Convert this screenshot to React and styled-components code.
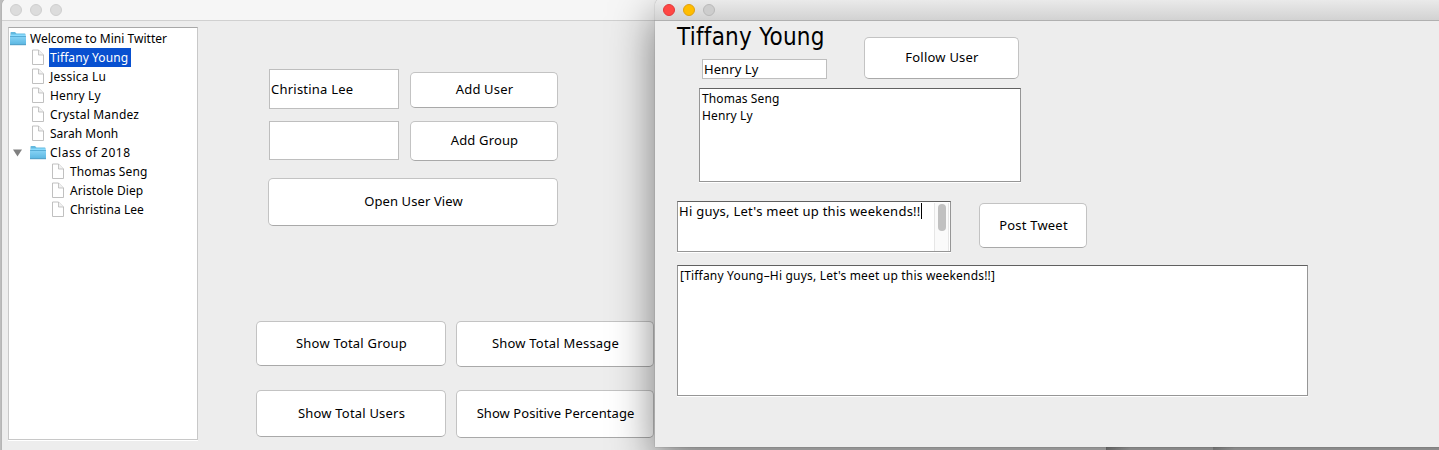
import React from "react";
import styled, { createGlobalStyle } from "styled-components";

const Global = createGlobalStyle`
  * { box-sizing: border-box; }
  html, body { margin: 0; height: 450px; overflow: hidden; }
  body { font-family: "Noto Sans", "Open Sans", sans-serif; color: #000; }
`;

const Desktop = styled.div`
  position: relative;
  width: 1439px;
  height: 450px;
  overflow: hidden;
  background: linear-gradient(90deg, #bdbdbd 0 1106px, #a0a0a0 1106px, #d8d8d8 1130px 1213px, #b4b4b4 1213px, #dedede 1235px);
`;

const Window = styled.section`
  position: absolute;
  top: -1px;
  left: ${(p) => p.$left}px;
  width: ${(p) => p.$width}px;
  height: ${(p) => p.$height}px;
  background: #ededed;
  border-radius: 6px 6px 0 0;
  box-shadow: ${(p) =>
    p.$active
      ? "0 0 1px rgba(0,0,0,.55), 0 16px 44px rgba(0,0,0,.5)"
      : "0 0 1px rgba(0,0,0,.4)"};
`;

const TitleBar = styled.header`
  display: flex;
  align-items: center;
  gap: 8px;
  height: 22px;
  padding: 0 8px;
  border-radius: 6px 6px 0 0;
  border-bottom: 1px solid ${(p) => (p.$active ? "#b0b0b0" : "#d0d0d0")};
  background: ${(p) => (p.$active ? "linear-gradient(#ebebeb, #d2d2d2)" : "#f6f6f6")};
`;

const Light = styled.i`
  width: 12px;
  height: 12px;
  border-radius: 50%;
  background: ${(p) => p.$fill};
  border: 1px solid ${(p) => p.$edge};
`;

const Text = styled.span`
  font-size: ${(p) => p.$size || 13}px;
  letter-spacing: ${(p) => p.$track || 0}px;
  line-height: 17px;
  white-space: pre;
`;

const MainBody = styled.div`
  display: flex;
  align-items: flex-start;
  padding: 6px 0 0 6px;
`;

const Tree = styled.div`
  width: 190px;
  height: 413px;
  padding: 1px 0;
  background: #fff;
  border: 1px solid #c8c8c8;
  border-top-color: #a8a8a8;
  box-shadow: 0 1px #fff;
`;

const TreeRow = styled.div`
  display: flex;
  align-items: center;
  height: 19px;
  padding-left: ${(p) => p.$indent}px;
`;

const Arrow = styled.svg`
  width: 10px;
  height: 8px;
  margin-right: 7px;
`;

const FileSvg = styled.svg`
  width: 13px;
  height: 17px;
  margin-right: 4px;
`;

const FolderSvg = styled.svg`
  width: 17px;
  height: 15px;
  margin-right: 3px;
`;

const NodeName = styled(Text)`
  height: 19px;
  line-height: 19px;
  padding: 0 3px 0 1px;
  color: ${(p) => (p.$selected ? "#fff" : "#000")};
  background: ${(p) => (p.$selected ? "#0850d0" : "transparent")};
`;

const Controls = styled.div`
  display: flex;
  flex-direction: column;
  padding: 42px 0 0 58px;
`;

const AddForm = styled.div`
  display: grid;
  grid-template-columns: 130px 148px;
  column-gap: 11px;
  row-gap: 12px;
  align-items: start;
  padding-left: 13px;
`;

const OpenRow = styled.div`
  display: flex;
  padding: 17px 0 0 12px;
`;

const StatsGrid = styled.div`
  display: grid;
  grid-template-columns: 190px 198px;
  column-gap: 10px;
  row-gap: 23px;
  align-items: start;
  padding-top: 95px;
`;

const Button = styled.button`
  display: flex;
  align-items: center;
  justify-content: center;
  width: ${(p) => p.$w}px;
  height: ${(p) => p.$h}px;
  padding: 0 0 ${(p) => p.$lift || 0}px 1px;
  margin-top: ${(p) => p.$drop || 0}px;
  font-family: inherit;
  color: #000;
  background: #fff;
  border: 1px solid #c3c3c3;
  border-bottom-color: #a9a9a9;
  border-radius: 5px;
`;

const Field = styled.div`
  display: flex;
  align-items: center;
  width: ${(p) => p.$w}px;
  height: ${(p) => p.$h}px;
  padding-left: 1px;
  background: #fff;
  border: 1px solid #bebebe;
`;

const UserBody = styled.div`
  padding-left: 22px;
`;

const Heading = styled.h1`
  margin: 0;
  height: 38px;
  font: 400 24px/32px "DejaVu Sans Condensed", "DejaVu Sans", sans-serif;
  font-stretch: condensed;
  letter-spacing: ${(p) => p.$track}px;
  white-space: nowrap;
`;

const TopRow = styled.div`
  display: flex;
  height: 67px;
`;

const Identity = styled.div`
  width: 187px;
`;

const FieldInset = styled.div`
  padding-left: 25px;
`;

const Pane = styled.div`
  display: flex;
  flex-direction: column;
  width: ${(p) => p.$w}px;
  height: ${(p) => p.$h}px;
  margin-left: ${(p) => p.$inset || 0}px;
  padding: 1px 2px;
  background: #fff;
  border: 1px solid #969696;
  border-top-color: #606060;
  box-shadow: 0 1px #fff;
`;

const Compose = styled.div`
  display: flex;
  gap: 28px;
  padding: 19px 0 13px;
`;

const ComposePane = styled(Pane)`
  flex-direction: row;
  justify-content: space-between;
  padding: 1px 1px 0;
`;

const Caret = styled.i`
  display: inline-block;
  width: 1px;
  height: 16px;
  background: #000;
  vertical-align: top;
`;

const ScrollTrack = styled.div`
  width: 15px;
  height: 48px;
  padding: 1px 3px;
  background: #fafafa;
  border: solid #e6e6e6;
  border-width: 0 1px;
`;

const Thumb = styled.div`
  width: 8px;
  height: 27px;
  border-radius: 4px;
  background: #c1c1c1;
`;

const FolderIcon = () => (
  <FolderSvg viewBox="0 0 17 15">
    <defs>
      <linearGradient id="folder" x2="0" y2="1">
        <stop offset="0" stopColor="#87d3f5" />
        <stop offset="1" stopColor="#5cb7e2" />
      </linearGradient>
    </defs>
    <path d="M1.5 13V1.7Q1.5 1 2.2 1H6L7.5 2.5H15.8Q16.5 2.5 16.5 3.3V13Z" fill="#63b9df" />
    <path d="M2 3.5H16V5H2Z" fill="#8bdcff" />
    <path d="M1 5.5H17V13.5H1Z" fill="url(#folder)" />
    <path d="M1 5.5H17" stroke="#4fa6cf" strokeWidth=".8" />
    <path d="M1 13.7H17" stroke="#3f97c2" />
  </FolderSvg>
);

const FileIcon = () => (
  <FileSvg viewBox="0 0 13 17" fill="#fff" stroke="#b9b9b9">
    <path d="M0.5 1H6.5L11.5 6V15.5H0.5Z" strokeWidth=".9" />
    <path d="M6.5 1V6H11.5" fill="#f1f1f1" strokeWidth=".8" />
  </FileSvg>
);

const NODES = [
  { name: "Welcome to Mini Twitter", kind: "folder", indent: 0, track: 0.02 },
  { name: "Tiffany Young", indent: 23, track: 0.08, selected: true },
  { name: "Jessica Lu", indent: 23, track: 0.22 },
  { name: "Henry Ly", indent: 23, track: 0.12 },
  { name: "Crystal Mandez", indent: 23, track: 0.2 },
  { name: "Sarah Monh", indent: 23, track: 0 },
  { name: "Class of 2018", kind: "folder", indent: 3, arrow: true, track: 0.5 },
  { name: "Thomas Seng", indent: 43, track: 0.1 },
  { name: "Aristole Diep", indent: 43, track: 0.1 },
  { name: "Christina Lee", indent: 43, track: 0.04 },
];

const GREY = { $fill: "#dcdcdc", $edge: "#cfcfcf" };

export default function App() {
  return (
    <Desktop>
      <Global />
      <Window $left={2} $width={1104} $height={460}>
        <TitleBar>
          <Light {...GREY} />
          <Light {...GREY} />
          <Light {...GREY} />
        </TitleBar>
        <MainBody>
          <Tree>
            {NODES.map((n) => (
              <TreeRow key={n.name} $indent={n.indent}>
                {n.arrow && (
                  <Arrow viewBox="0 0 10 8">
                    <path d="M1 0.5H10L5.5 7.5Z" fill="#808080" />
                  </Arrow>
                )}
                {n.kind === "folder" ? <FolderIcon /> : <FileIcon />}
                <NodeName $size={12} $track={n.track} $selected={n.selected}>
                  {n.name}
                </NodeName>
              </TreeRow>
            ))}
          </Tree>
          <Controls>
            <AddForm>
              <Field $w={130} $h={40}><Text $track={0.23}>Christina Lee</Text></Field>
              <Button $w={148} $h={36} $drop={3} $lift={2}><Text $track={0.18}>Add User</Text></Button>
              <Field $w={130} $h={39}><Text /></Field>
              <Button $w={148} $h={40} $lift={2}><Text $track={0.15}>Add Group</Text></Button>
            </AddForm>
            <OpenRow>
              <Button $w={290} $h={48} $lift={2}><Text $track={0.1}>Open User View</Text></Button>
            </OpenRow>
            <StatsGrid>
              <Button $w={190} $h={45}><Text $track={0.2}>Show Total Group</Text></Button>
              <Button $w={198} $h={46} $lift={2}><Text $track={0.2}>Show Total Message</Text></Button>
              <Button $w={190} $h={47}><Text $track={0.2}>Show Total Users</Text></Button>
              <Button $w={198} $h={48} $lift={2}><Text $track={0.06}>Show Positive Percentage</Text></Button>
            </StatsGrid>
          </Controls>
        </MainBody>
      </Window>

      <Window $active $left={655} $width={900} $height={448}>
        <TitleBar $active>
          <Light $fill="#ff4744" $edge="#e2383a" />
          <Light $fill="#ffbd00" $edge="#e0a010" />
          <Light $fill="#cdcdcd" $edge="#b9b9b9" />
        </TitleBar>
        <UserBody>
          <TopRow>
            <Identity>
              <Heading $track={0.25}>Tiffany Young</Heading>
              <FieldInset>
                <Field $w={125} $h={20}><Text $track={0.08}>Henry Ly</Text></Field>
              </FieldInset>
            </Identity>
            <Button $w={155} $h={42} $drop={16} $lift={2}><Text $track={0.22}>Follow User</Text></Button>
          </TopRow>
          <Pane $w={322} $h={94} $inset={22}>
            <Text $size={12} $track={0.1}>Thomas Seng</Text>
            <Text $size={12} $track={0.12}>Henry Ly</Text>
          </Pane>
          <Compose>
            <ComposePane $w={274} $h={51}>
              <Text $track={0.26}>Hi guys, Let's meet up this weekends!!<Caret /></Text>
              <ScrollTrack><Thumb /></ScrollTrack>
            </ComposePane>
            <Button $w={108} $h={45} $drop={2}><Text $track={0.2}>Post Tweet</Text></Button>
          </Compose>
          <Pane $w={631} $h={131}>
            <Text $size={12} $track={0.19}>[Tiffany Young–Hi guys, Let's meet up this weekends!!]</Text>
          </Pane>
        </UserBody>
      </Window>
    </Desktop>
  );
}
